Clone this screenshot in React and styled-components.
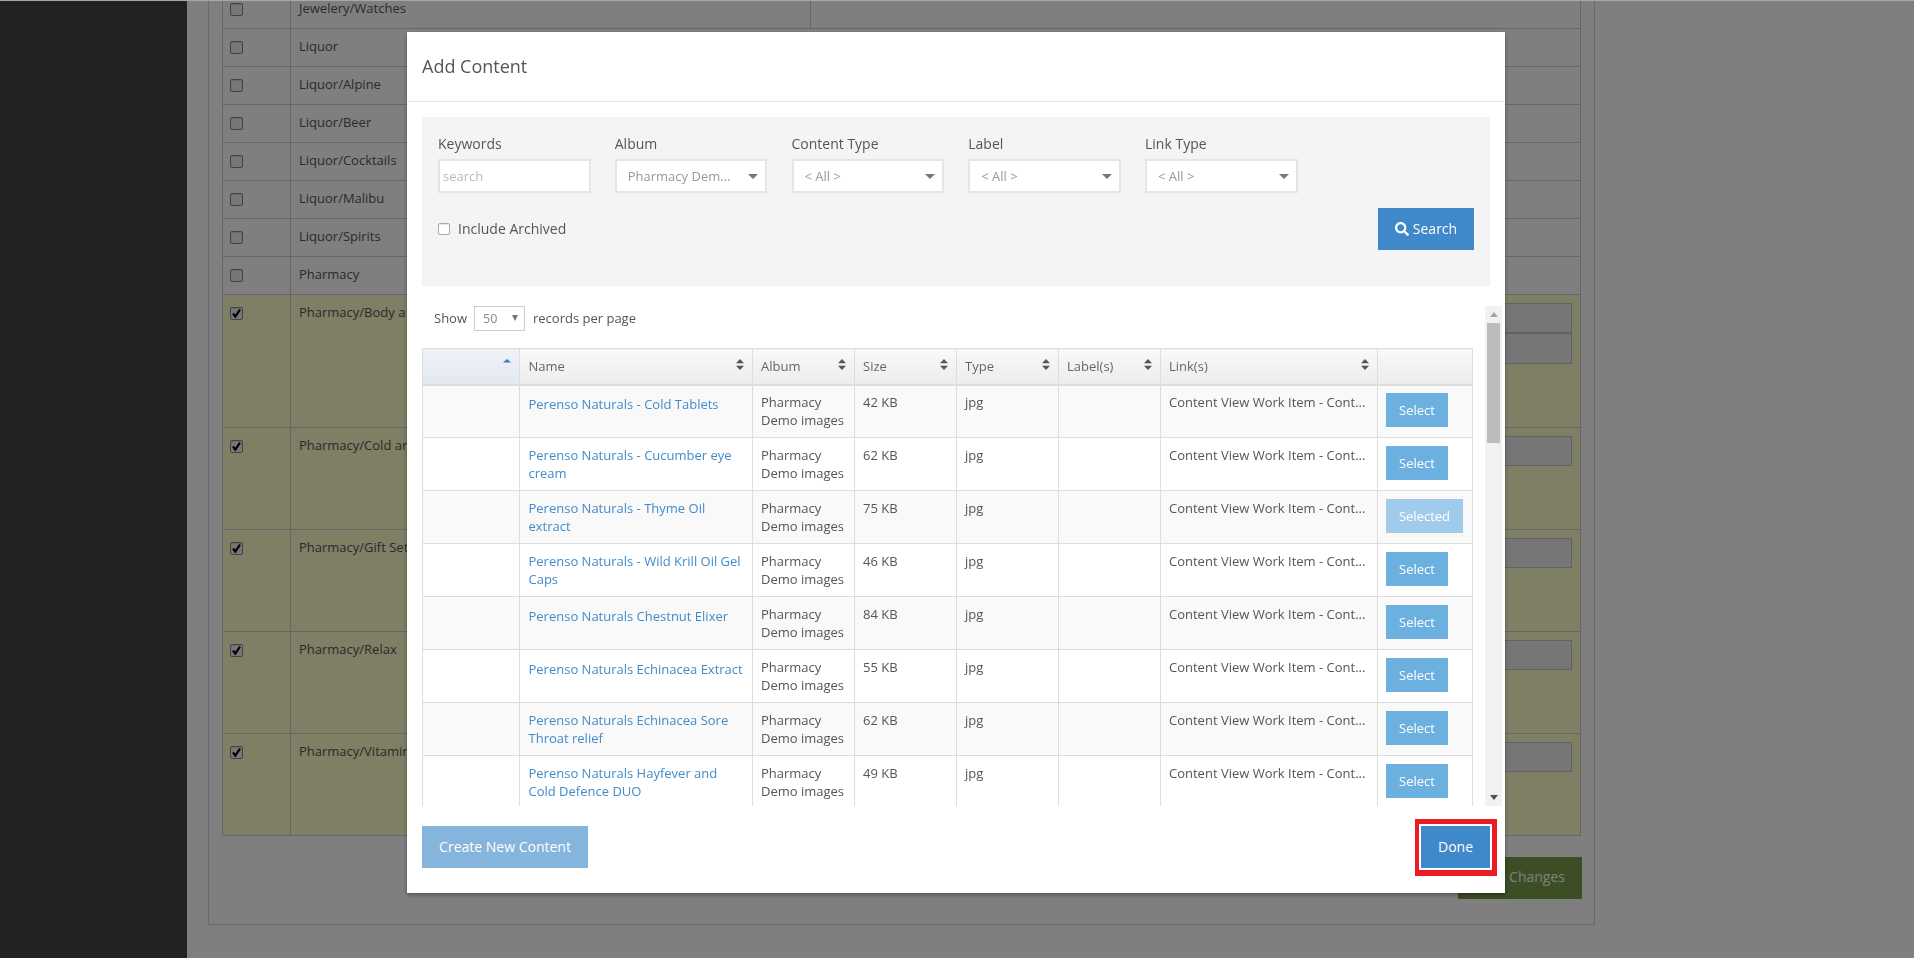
import React from "react";
import styled, { createGlobalStyle } from "styled-components";
import { FaSearch } from "react-icons/fa";

const Global = createGlobalStyle`
  html, body { margin: 0; padding: 0; height: 100%; overflow: hidden; }
  body { font-family: "Open Sans", "Liberation Sans", sans-serif; font-size: 13px; line-height: 18px; color: #555; background: #fff; }
  * { box-sizing: border-box; }
`;

/* ---------- page behind the dialog ---------- */
const Page = styled.div`
  display: flex;
  height: 958px;
  overflow: hidden;
  background: #fff;
`;
const Sidebar = styled.aside`
  flex: 0 0 187px;
  background: #444;
`;
const Main = styled.main`
  flex: 1;
  padding: 0 319px 0 21px;
`;
const Panel = styled.section`
  height: 925px;
  border: 1px solid #ccd3e0;
  border-top: 0;
  padding: 0 13px;
  display: flex;
  flex-direction: column;
`;
const BgTable = styled.div`
  margin-top: -9px;
  border: 1px solid #ccc;
  border-top: 0;
`;
const BgRow = styled.div`
  display: flex;
  height: ${(p) => p.$h}px;
  background: ${(p) => (p.$on ? "#fdffc8" : "#fff")};
  border-bottom: 1px solid #ccc;
  &:last-child { border-bottom: 0; }
`;
const BgCheckCell = styled.div`
  flex: 0 0 68px;
  border-right: 1px solid #ccc;
  padding: 12px 0 0 7px;
`;
const BgBox = styled.span`
  display: flex;
  align-items: center;
  justify-content: center;
  width: 13px;
  height: 13px;
  border: 1px solid #888;
  border-radius: 2px;
  background: #efefef;
  box-shadow: inset 0 1px 1px rgba(0, 0, 0, 0.12);
`;
const BgNameCell = styled.div`
  flex: 0 0 520px;
  padding: 8px 8px;
  color: #555;
  white-space: nowrap;
  border-right: ${(p) => (p.$line ? "1px solid #ccc" : "0")};
`;
const BgInputs = styled.div`
  flex: 1;
  display: flex;
  flex-direction: column;
  align-items: flex-end;
  padding: 8px 8px 0 0;
`;
const BgInput = styled.div`
  width: 220px;
  height: ${(p) => p.$h}px;
  border: 1px solid #c4c4c4;
  background: #ececec;
`;
const SaveRow = styled.div`
  display: flex;
  justify-content: flex-end;
  margin-top: 21px;
`;
const SaveButton = styled.div`
  width: 124px;
  height: 42px;
  display: flex;
  align-items: center;
  justify-content: flex-end;
  padding: 0 17px 2px 0;
  background: #789c48;
  color: #fff;
  font-size: 14px;
  white-space: nowrap;
  margin-right: -1px;
`;

/* ---------- overlay ---------- */
const Backdrop = styled.div`
  position: fixed;
  inset: 0;
  background: rgba(0, 0, 0, 0.5);
`;
const TopEdge = styled.div`
  position: fixed;
  left: 0;
  right: 0;
  top: 0;
  height: 1px;
  background: #a8a8a8;
`;
const Modal = styled.div`
  position: fixed;
  left: 407px;
  top: 32px;
  width: 1098px;
  height: 861px;
  background: #fff;
  box-shadow: 0 2px 4px rgba(0, 0, 0, 0.35);
  display: flex;
  flex-direction: column;
`;
const ModalHeader = styled.header`
  height: 70px;
  flex: none;
  padding: 0 15px 2px;
  display: flex;
  align-items: center;
  border-bottom: 1px solid #e5e5e5;
`;
const Title = styled.h4`
  margin: 0;
  font-size: 18px;
  line-height: 24px;
  font-weight: 400;
  color: #555;
`;
const ModalBody = styled.div`
  padding: 15px 15px 0;
`;
const FilterPanel = styled.div`
  height: 169px;
  background: #f4f4f4;
  padding: 18px 16px 0;
`;
const FilterGrid = styled.div`
  display: flex;
  gap: 24.25px;
`;
const Field = styled.div`
  width: 152.5px;
  display: flex;
  flex-direction: column;
`;
const FieldLabel = styled.label`
  height: 24px;
  color: #555;
  font-size: 14px;
`;
const TextInput = styled.input`
  width: 100%;
  height: 34px;
  border: 2px solid #e5e5e5;
  background: #fff;
  padding: 0 3px;
  font: inherit;
  color: #555;
  outline: none;
  &::placeholder { color: #bbb; opacity: 1; }
`;
const SelectBox = styled.div`
  height: 34px;
  border: 2px solid #e5e5e5;
  background: #fff;
  padding: 0 7px 0 11px;
  display: flex;
  align-items: center;
  justify-content: space-between;
  color: #999;
  white-space: nowrap;
`;
const Caret = styled.span`
  flex: none;
  width: 0;
  height: 0;
  border-left: 5px solid transparent;
  border-right: 5px solid transparent;
  border-top: 5px solid #777;
`;
const FilterActions = styled.div`
  display: flex;
  align-items: center;
  justify-content: space-between;
  margin-top: 15px;
`;
const CheckLabel = styled.label`
  display: flex;
  align-items: center;
  gap: 8px;
  color: #555;
  font-size: 14px;
`;
const Box = styled.span`
  display: block;
  width: 12px;
  height: 12px;
  border: 1px solid #aaa;
  border-radius: 2px;
  background: #fff;
  box-shadow: inset 0 1px 1px rgba(0, 0, 0, 0.1);
`;
const Button = styled.button`
  height: 42px;
  border: 0;
  padding: 0;
  font: inherit;
  font-size: 14px;
  color: #fff;
  background: #3f88ca;
  display: flex;
  align-items: center;
  justify-content: center;
  gap: 4px;
  width: ${(p) => p.$w}px;
`;
const FadedButton = styled(Button)`
  background: #85b4dc;
`;
const DoneWrap = styled.div`
  position: relative;
  &::after {
    content: "";
    position: absolute;
    left: -6px;
    right: -7px;
    top: -7px;
    bottom: -8px;
    border-style: solid;
    border-color: #ed1c24;
    border-width: 5px 5px 6px 4px;
  }
`;
const ResultsArea = styled.div`
  margin: 20px -12px 0 0;
  height: 500px;
  display: flex;
`;
const ResultsContent = styled.div`
  width: 1063px;
  overflow: hidden;
`;
const LengthRow = styled.div`
  height: 25px;
  display: flex;
  align-items: center;
  padding: 0 0 2px 12px;
  margin-bottom: 17px;
  color: #555;
`;
const LengthSelect = styled.div`
  width: 51px;
  height: 25px;
  margin: 2px 8px 0 7px;
  border: 1px solid #ccc;
  display: flex;
  align-items: center;
  justify-content: space-between;
  padding: 0 6px 0 8px;
  color: #888;
  font-size: 12.5px;
`;
const SmallCaret = styled.span`
  width: 0;
  height: 0;
  margin-top: -2px;
  border-left: 3px solid transparent;
  border-right: 3px solid transparent;
  border-top: 6px solid #777;
`;
const Table = styled.table`
  width: 1050px;
  table-layout: fixed;
  border-collapse: collapse;
`;
const Th = styled.th`
  height: 36px;
  padding: 0 8px 0 8.5px;
  border: 1px solid #ddd;
  border-bottom: 2px solid #ddd;
  background: ${(p) =>
    p.$sorted
      ? "linear-gradient(#eff2f7, #e3e7ef)"
      : "linear-gradient(#f9f9f9, #ececec)"};
  font-weight: 400;
  color: #666;
  text-align: left;
`;
const ThInner = styled.div`
  display: flex;
  align-items: center;
  justify-content: space-between;
`;
const SortIcon = styled.svg`
  flex: none;
  width: 8px;
  height: 11px;
  margin-top: -3px;
`;
const Td = styled.td`
  height: 53px;
  padding: 8px 8.5px 0;
  border: 1px solid #ddd;
  vertical-align: top;
  color: #555;
  overflow: hidden;
`;
const Tr = styled.tr`
  background: ${(p) => (p.$odd ? "#f9f9f9" : "#fff")};
  &:first-child ${Td} { padding-top: 7px; }
`;
const NameLink = styled.a`
  display: block;
  color: #428bca;
  text-decoration: none;
  padding-top: ${(p) => (p.$single ? "2px" : "0")};
`;
const RowButton = styled.button`
  display: block;
  height: 34px;
  width: ${(p) => (p.$selected ? 77 : 62)}px;
  border: 0;
  padding: 0;
  font: inherit;
  color: #fff;
  background: ${(p) => (p.$selected ? "#a0cbea" : "#6cb0e0")};
`;
const Scrollbar = styled.div`
  width: 17px;
  background: #f1f1f1;
  display: flex;
  flex-direction: column;
  align-items: center;
`;
const ScrollArrow = styled.svg`
  display: block;
  width: 8px;
  height: 5px;
`;
const ScrollEnd = styled.div`
  height: 17px;
  display: flex;
  align-items: center;
`;
const ScrollThumb = styled.div`
  width: 13px;
  height: 120px;
  background: #bcbcbc;
`;
const ScrollTrack = styled.div`
  flex: 1;
`;
const ModalFooter = styled.footer`
  margin-top: 20px;
  display: flex;
  align-items: center;
  justify-content: space-between;
`;

const Sort = () => (
  <SortIcon viewBox="0 0 8 11">
    <path d="M4 0 L8 4.2 H0 Z M0 6.8 H8 L4 11 Z" fill="#555" />
  </SortIcon>
);
const SortUp = () => (
  <SortIcon viewBox="0 0 8 11">
    <path d="M4 0 L8 3.4 H0 Z" fill="#2f7fd0" />
  </SortIcon>
);
const Tick = () => (
  <svg width="11" height="11" viewBox="0 0 11 11">
    <path d="M2 5.5 L4.3 8.6 L9 1.6" fill="none" stroke="#000" strokeWidth="2.2" />
  </svg>
);

const bgRows = [
  { name: "Jewelery/Watches", h: 38, line: true },
  { name: "Liquor", h: 38 },
  { name: "Liquor/Alpine", h: 38 },
  { name: "Liquor/Beer", h: 38 },
  { name: "Liquor/Cocktails", h: 38 },
  { name: "Liquor/Malibu", h: 38 },
  { name: "Liquor/Spirits", h: 38 },
  { name: "Pharmacy", h: 38 },
  { name: "Pharmacy/Body a", h: 133, on: true, inputs: [30, 31] },
  { name: "Pharmacy/Cold an", h: 102, on: true, inputs: [30] },
  { name: "Pharmacy/Gift Set", h: 102, on: true, inputs: [30] },
  { name: "Pharmacy/Relax", h: 102, on: true, inputs: [30] },
  { name: "Pharmacy/Vitamin", h: 101, on: true, inputs: [30] },
];

const items = [
  ["Perenso Naturals - Cold Tablets", "42 KB", true],
  ["Perenso Naturals - Cucumber eye cream", "62 KB"],
  ["Perenso Naturals - Thyme Oil extract", "75 KB", false, true],
  ["Perenso Naturals - Wild Krill Oil Gel Caps", "46 KB"],
  ["Perenso Naturals Chestnut Elixer", "84 KB", true],
  ["Perenso Naturals Echinacea Extract", "55 KB", true],
  ["Perenso Naturals Echinacea Sore Throat relief", "62 KB"],
  ["Perenso Naturals Hayfever and Cold Defence DUO", "49 KB"],
];

const cols = [97, 232.5, 102, 102, 102, 102, 217, 95.5];
const heads = ["Name", "Album", "Size", "Type", "Label(s)", "Link(s)"];

export default function App() {
  return (
    <>
      <Global />
      <Page>
        <Sidebar />
        <Main>
          <Panel>
            <BgTable>
              {bgRows.map((r) => (
                <BgRow key={r.name} $h={r.h} $on={r.on}>
                  <BgCheckCell>
                    <BgBox>{r.on && <Tick />}</BgBox>
                  </BgCheckCell>
                  <BgNameCell $line={r.line}>{r.name}</BgNameCell>
                  <BgInputs>
                    {(r.inputs || []).map((h, i) => (
                      <BgInput key={i} $h={h} />
                    ))}
                  </BgInputs>
                </BgRow>
              ))}
            </BgTable>
            <SaveRow>
              <SaveButton>Save Changes</SaveButton>
            </SaveRow>
          </Panel>
        </Main>
      </Page>
      <Backdrop />
      <TopEdge />
      <Modal>
        <ModalHeader>
          <Title>Add Content</Title>
        </ModalHeader>
        <ModalBody>
          <FilterPanel>
            <FilterGrid>
              <Field>
                <FieldLabel>Keywords</FieldLabel>
                <TextInput placeholder="search" readOnly />
              </Field>
              <Field>
                <FieldLabel>Album</FieldLabel>
                <SelectBox>
                  Pharmacy Dem...
                  <Caret />
                </SelectBox>
              </Field>
              {["Content Type", "Label", "Link Type"].map((l) => (
                <Field key={l}>
                  <FieldLabel>{l}</FieldLabel>
                  <SelectBox>
                    {"< All >"}
                    <Caret />
                  </SelectBox>
                </Field>
              ))}
            </FilterGrid>
            <FilterActions>
              <CheckLabel>
                <Box />
                Include Archived
              </CheckLabel>
              <Button $w={96}>
                <FaSearch size={14} />
                Search
              </Button>
            </FilterActions>
          </FilterPanel>
          <ResultsArea>
            <ResultsContent>
              <LengthRow>
                Show
                <LengthSelect>
                  50
                  <SmallCaret />
                </LengthSelect>
                records per page
              </LengthRow>
              <Table>
                <colgroup>
                  {cols.map((w, i) => (
                    <col key={i} width={w} />
                  ))}
                </colgroup>
                <thead>
                  <tr>
                    <Th $sorted>
                      <ThInner>
                        <span />
                        <SortUp />
                      </ThInner>
                    </Th>
                    {heads.map((h) => (
                      <Th key={h}>
                        <ThInner>
                          {h}
                          <Sort />
                        </ThInner>
                      </Th>
                    ))}
                    <Th />
                  </tr>
                </thead>
                <tbody>
                  {items.map(([name, size, single, selected], i) => (
                    <Tr key={name} $odd={i % 2 === 0}>
                      <Td />
                      <Td>
                        <NameLink $single={single}>{name}</NameLink>
                      </Td>
                      <Td>Pharmacy Demo images</Td>
                      <Td>{size}</Td>
                      <Td>jpg</Td>
                      <Td />
                      <Td>Content View Work Item - Cont...</Td>
                      <Td>
                        <RowButton $selected={selected}>
                          {selected ? "Selected" : "Select"}
                        </RowButton>
                      </Td>
                    </Tr>
                  ))}
                </tbody>
              </Table>
            </ResultsContent>
            <Scrollbar>
              <ScrollEnd>
                <ScrollArrow viewBox="0 0 8 5">
                  <path d="M4 0 L8 5 H0 Z" fill="#a3a3a3" />
                </ScrollArrow>
              </ScrollEnd>
              <ScrollThumb />
              <ScrollTrack />
              <ScrollEnd>
                <ScrollArrow viewBox="0 0 8 5">
                  <path d="M0 0 H8 L4 5 Z" fill="#505050" />
                </ScrollArrow>
              </ScrollEnd>
            </Scrollbar>
          </ResultsArea>
          <ModalFooter>
            <FadedButton $w={166}>Create New Content</FadedButton>
            <DoneWrap>
              <Button $w={69}>Done</Button>
            </DoneWrap>
          </ModalFooter>
        </ModalBody>
      </Modal>
    </>
  );
}
